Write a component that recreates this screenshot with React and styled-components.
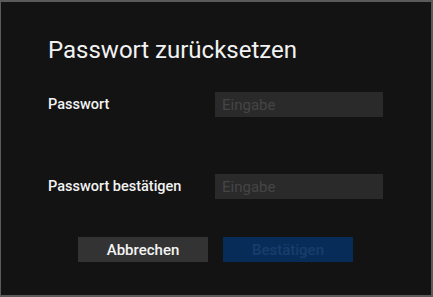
import React from "react";
import styled, { createGlobalStyle } from "styled-components";

const Global = createGlobalStyle`
  html, body {
    margin: 0;
    padding: 0;
    background: #121212;
  }
  * { box-sizing: border-box; }
`;

const Dialog = styled.div`
  width: 433px;
  height: 297px;
  background: #131313;
  border: 2px solid #5a5a5a;
  border-left-width: 1px;
  padding: 34px 48px 0 47px;
  font-family: Roboto, "Noto Sans", sans-serif;
  color: #f2f2f2;
  display: flex;
  flex-direction: column;
`;

const Title = styled.h1`
  margin: 0;
  font-size: 24px;
  font-weight: 400;
  line-height: 28px;
`;

const Field = styled.div`
  display: grid;
  grid-template-columns: 167px 168px;
  align-items: center;
  margin-top: ${(p) => p.$top}px;
`;

const Label = styled.label`
  font-size: 14.5px;
  font-weight: 500;
`;

const Input = styled.input`
  height: 25px;
  background: #2a2a2a;
  border: none;
  outline: none;
  padding: 0 7px;
  font-family: inherit;
  font-size: 15px;
  color: #ddd;
  &::placeholder { color: #454545; }
`;

const Actions = styled.div`
  display: flex;
  gap: 15px;
  margin-top: 38px;
  padding-left: 30px;
`;

const Button = styled.button`
  width: 130px;
  height: 25px;
  border: none;
  padding: 0;
  font-family: inherit;
  font-size: 15px;
  font-weight: 500;
  background: ${(p) => (p.$primary ? "#082c58" : "#333333")};
  color: ${(p) => (p.$primary ? "#183d6c" : "#f4f4f4")};
`;

export default function App() {
  return (
    <>
      <Global />
      <Dialog>
        <Title>Passwort zurücksetzen</Title>
        <Field $top={28}>
          <Label>Passwort</Label>
          <Input placeholder="Eingabe" type="password" />
        </Field>
        <Field $top={57}>
          <Label>Passwort bestätigen</Label>
          <Input placeholder="Eingabe" type="password" />
        </Field>
        <Actions>
          <Button>Abbrechen</Button>
          <Button $primary disabled>Bestätigen</Button>
        </Actions>
      </Dialog>
    </>
  );
}
